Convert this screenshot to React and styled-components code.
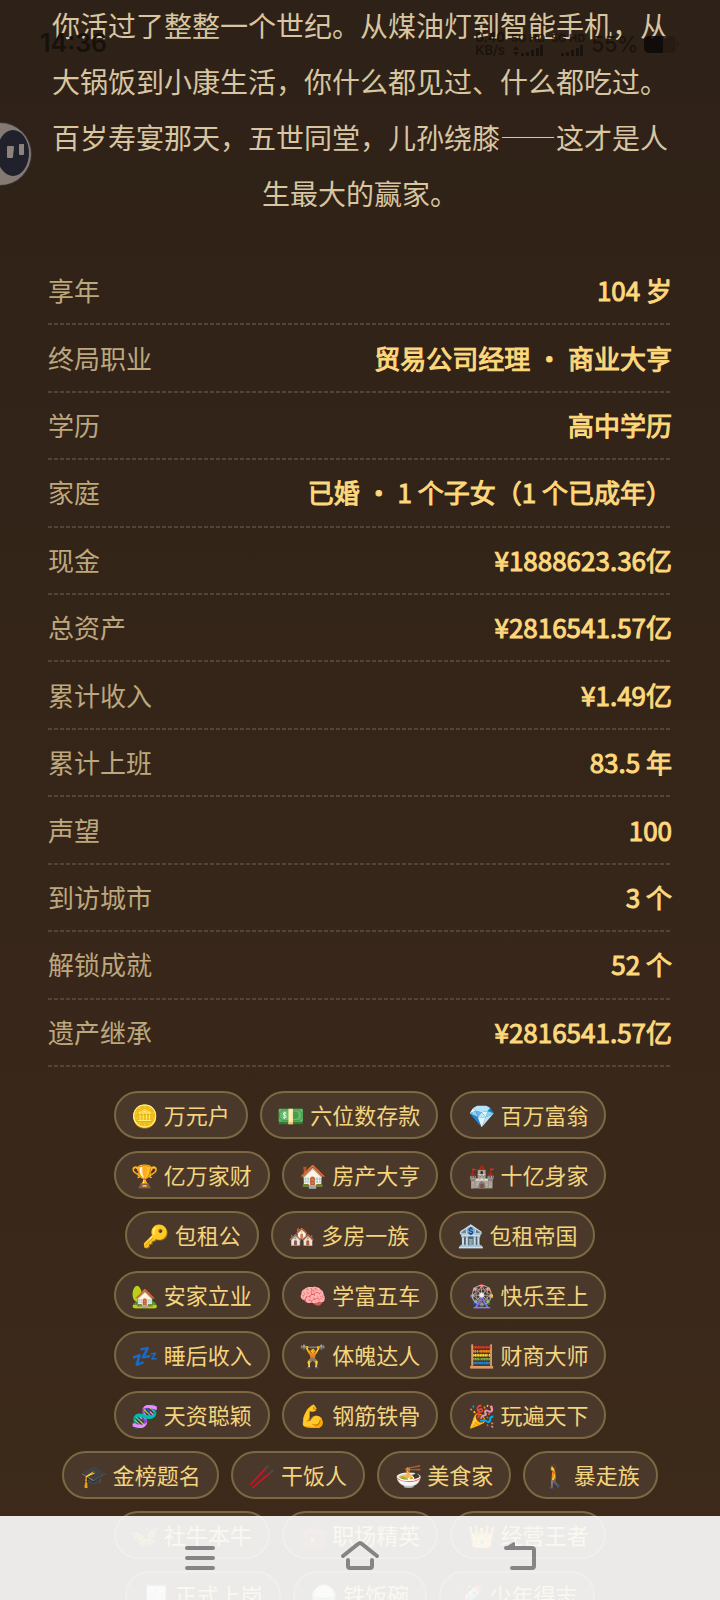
import React from 'react';
import styled, { createGlobalStyle } from 'styled-components';

const GlobalStyle = createGlobalStyle`
  * { box-sizing: border-box; }
  body {
    margin: 0;
    background: #2e2118;
    font-family: "Noto Sans CJK SC", "Noto Color Emoji", sans-serif;
  }
`;

const Page = styled.div`
  position: relative;
  height: 100vh;
  overflow: hidden;
  background: linear-gradient(180deg, #2e2117 0%, #3d2a1b 100%);
`;

const Content = styled.main`
  margin-top: -3px;
  padding: 0 48px;
`;

const Story = styled.p`
  margin: 0 0 37px;
  font-size: 28px;
  line-height: 56px;
  text-align: center;
  color: #d8c5a1;
`;

const Dash = styled.span`
  font-family: "Noto Sans CJK SC", sans-serif;
  font-weight: 300;
  font-feature-settings: "fwid";
`;

const Stats = styled.dl`
  display: grid;
  grid-auto-rows: 1fr;
  height: 809px;
  margin: 0;
`;

const StatRow = styled.div`
  display: flex;
  justify-content: space-between;
  align-items: center;
  padding-bottom: 3px;
  background: repeating-linear-gradient(90deg, #524436 0 4px, transparent 4px 6px) left bottom / 100% 2px no-repeat;
  font-size: 26px;
  line-height: 38px;
`;

const StatLabel = styled.dt`
  color: #bda77e;
`;

const StatValue = styled.dd`
  margin: 0;
  color: #fdd87c;
  -webkit-text-stroke: 1px #fdd87c;
`;

const Badges = styled.ul`
  display: flex;
  flex-wrap: wrap;
  justify-content: center;
  gap: 12px;
  margin: 24px 0 0;
  padding: 0;
  list-style: none;
`;

const Badge = styled.li`
  height: 48px;
  padding: 0 16px;
  border: 2px solid #7d6844;
  border-radius: 24px;
  background: #4a392b;
  color: #f5d47e;
  font-size: 22px;
  line-height: 42px;
  white-space: nowrap;
`;

const StatusBar = styled.header`
  position: absolute;
  top: 0;
  left: 0;
  right: 0;
  display: flex;
  justify-content: space-between;
  align-items: flex-end;
  height: 57px;
  padding: 0 40px;
  color: #17110c;
  font-family: Inter, sans-serif;
`;

const Clock = styled.time`
  font-size: 25px;
  line-height: 28px;
  font-weight: 600;
`;

const StatusIcons = styled.div`
  display: flex;
  align-items: flex-end;
  gap: 6px;
  opacity: 0.85;
`;

const StatusColumn = styled.div`
  display: flex;
  flex-direction: column;
  align-items: center;
  font-size: ${(p) => (p.$small ? 11 : 13)}px;
  line-height: 13px;
  font-weight: 600;
`;

const Percent = styled.span`
  font-size: 21px;
  line-height: 24px;
  font-weight: 500;
`;

const Assistant = styled.button`
  position: absolute;
  top: 120px;
  left: 0;
  padding: 0;
  border: 0;
  background: none;
  line-height: 0;
`;

const NavBar = styled.nav`
  position: absolute;
  left: 0;
  right: 0;
  bottom: 0;
  display: flex;
  justify-content: center;
  align-items: center;
  gap: 120px;
  height: 84px;
  background: rgba(251, 251, 250, 0.92);
`;

const NavButton = styled.button`
  width: 40px;
  height: 40px;
  padding: 0;
  border: 0;
  background: none;
  line-height: 0;
`;

const stats = [
  ['享年', '104 岁'],
  ['终局职业', '贸易公司经理 · 商业大亨'],
  ['学历', '高中学历'],
  ['家庭', '已婚 · 1 个子女（1 个已成年）'],
  ['现金', '¥1888623.36亿'],
  ['总资产', '¥2816541.57亿'],
  ['累计收入', '¥1.49亿'],
  ['累计上班', '83.5 年'],
  ['声望', '100'],
  ['到访城市', '3 个'],
  ['解锁成就', '52 个'],
  ['遗产继承', '¥2816541.57亿'],
];

const badges = [
  '🪙 万元户', '💵 六位数存款', '💎 百万富翁',
  '🏆 亿万家财', '🏠 房产大亨', '🏰 十亿身家',
  '🔑 包租公', '🏘️ 多房一族', '🏦 包租帝国',
  '🏡 安家立业', '🧠 学富五车', '🎡 快乐至上',
  '💤 睡后收入', '🏋️ 体魄达人', '🧮 财商大师',
  '🧬 天资聪颖', '💪 钢筋铁骨', '🎉 玩遍天下',
  '🎓 金榜题名', '🥢 干饭人', '🍜 美食家', '🚶 暴走族',
  '🦋 社牛本牛', '💼 职场精英', '👑 经营王者',
  '🧾 正式上岗', '🍚 铁饭碗', '🚀 少年得志',
];

const Signal = ({ arrows }) => (
  <svg width="32" height="12" viewBox="0 0 32 12" fill="currentColor" aria-hidden="true">
    {arrows && <path d="M1 5l3-4 3 4zM1 7l3 4 3-4z" />}
    <path d="M9 8h3v3H9zM14 7h3v4h-3zM19 5h3v6h-3zM24 3h3v8h-3zM28 0h3v11h-3z" />
  </svg>
);

export default function App() {
  return (
    <Page>
      <GlobalStyle />
      <StatusBar>
        <Clock>14:36</Clock>
        <StatusIcons>
          <StatusColumn>
            <span>0.40</span>
            <span>KB/s</span>
          </StatusColumn>
          <StatusColumn $small>
            <span>5G HD</span>
            <Signal arrows />
          </StatusColumn>
          <StatusColumn $small>
            <span>5G HD</span>
            <Signal />
          </StatusColumn>
          <Percent>55%</Percent>
          <svg width="36" height="22" viewBox="0 0 36 22" aria-hidden="true">
            <rect x="0" y="1" width="32" height="17" rx="5" fill="#261a14" />
            <path d="M5 1h14v17H5a5 5 0 0 1-5-5V6a5 5 0 0 1 5-5z" fill="#0d0908" />
            <path d="M33 6q3 3 0 7z" fill="#261a14" />
          </svg>
        </StatusIcons>
      </StatusBar>
      <Content>
        <Story>
          你活过了整整一个世纪。从煤油灯到智能手机，从大锅饭到小康生活，你什么都见过、什么都吃过。百岁寿宴那天，五世同堂，儿孙绕膝<Dash>——</Dash>这才是人生最大的赢家。
        </Story>
        <Stats>
          {stats.map(([label, value]) => (
            <StatRow key={label}>
              <StatLabel>{label}</StatLabel>
              <StatValue>{value}</StatValue>
            </StatRow>
          ))}
        </Stats>
        <Badges>
          {badges.map((badge) => (
            <Badge key={badge}>{badge}</Badge>
          ))}
        </Badges>
      </Content>
      <Assistant aria-label="助手">
        <svg width="36" height="68" viewBox="0 0 36 68">
          <circle cx="0" cy="34" r="32" fill="#39343a" />
          <circle cx="0" cy="34" r="31" fill="#847a73" />
          <ellipse cx="13" cy="33" rx="16" ry="23" fill="#20212b" />
          <path d="M8 26h5q1 0 1 1l-1 10q0 1-1 1H8q-1 0-1-1V27q0-1 1-1zM20 24h4v10q0 1-1 1h-3q-1 0-1-1V25q0-1 1-1z" fill="#8c847c" />
        </svg>
      </Assistant>
      <NavBar>
        <NavButton aria-label="菜单">
          <svg width="40" height="40" viewBox="0 0 40 40" fill="none" stroke="#858585" strokeWidth="4" strokeLinecap="round">
            <path d="M7 10h26M7 20h26M7 30h26" />
          </svg>
        </NavButton>
        <NavButton aria-label="主页">
          <svg width="40" height="40" viewBox="0 0 40 40" fill="none" stroke="#858585" strokeWidth="4" strokeLinecap="round" strokeLinejoin="round">
            <path d="M3 18L18 6q2-2 4 0l15 12M8 22v6q0 2 2 2h20q2 0 2-2v-6" />
          </svg>
        </NavButton>
        <NavButton aria-label="返回">
          <svg width="40" height="40" viewBox="0 0 40 40" fill="none" stroke="#858585" strokeWidth="4" strokeLinecap="round" strokeLinejoin="round">
            <path d="M6 10h26q2 0 2 2v16q0 2-2 2H12" />
            <path d="M6 10l8-5v5z" fill="#858585" strokeWidth="2" />
          </svg>
        </NavButton>
      </NavBar>
    </Page>
  );
}
